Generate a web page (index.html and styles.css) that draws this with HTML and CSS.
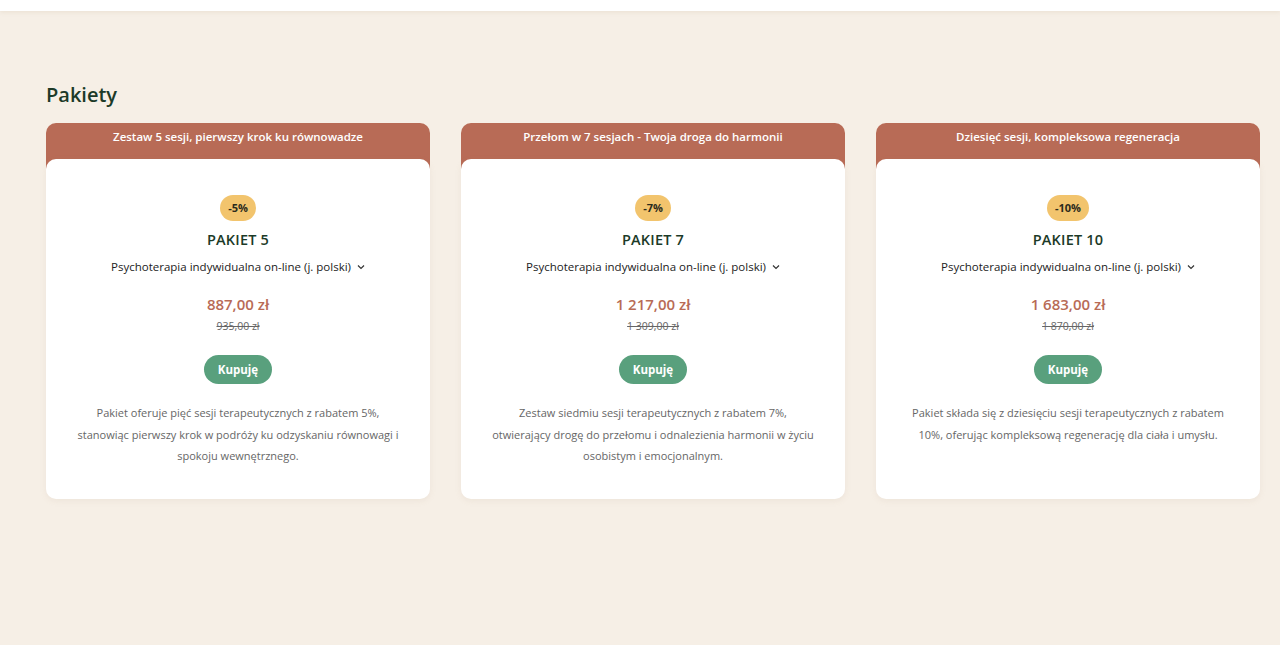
FILE: index.html
```html
<!doctype html>
<html lang="pl">
  <head>
    <meta charset="utf-8">
    <title>Pakiety</title>
    <meta name="viewport" content="width=device-width, initial-scale=1">
    <link rel="stylesheet" href="styles.css">
  </head>
  <body>
    <div class="topbar"></div>
    <section class="packages">
      <h2 class="packages-title">Pakiety</h2>
      <div class="packages-grid">
        <div class="card">
          <div class="card-head">Zestaw 5 sesji, pierwszy krok ku równowadze</div>
          <div class="card-body">
            <span class="badge">-5%</span>
            <h3 class="card-name">PAKIET 5</h3>
            <div class="card-select">Psychoterapia indywidualna on-line (j. polski)
              <svg class="chev" width="8" height="6" viewBox="0 0 8 6"><path d="M1 1.5 4 4.5 7 1.5" fill="none" stroke="#333" stroke-width="1.2"/></svg>
            </div>
            <div class="price">887,00 zł</div>
            <div class="old-price">935,00 zł</div>
            <a class="buy" href="#">Kupuję</a>
            <p class="desc">Pakiet oferuje pięć sesji terapeutycznych z rabatem 5%, stanowiąc pierwszy krok w podróży ku odzyskaniu równowagi i spokoju wewnętrznego.</p>
          </div>
        </div>
        <div class="card">
          <div class="card-head">Przełom w 7 sesjach - Twoja droga do harmonii</div>
          <div class="card-body">
            <span class="badge">-7%</span>
            <h3 class="card-name">PAKIET 7</h3>
            <div class="card-select">Psychoterapia indywidualna on-line (j. polski)
              <svg class="chev" width="8" height="6" viewBox="0 0 8 6"><path d="M1 1.5 4 4.5 7 1.5" fill="none" stroke="#333" stroke-width="1.2"/></svg>
            </div>
            <div class="price">1 217,00 zł</div>
            <div class="old-price">1 309,00 zł</div>
            <a class="buy" href="#">Kupuję</a>
            <p class="desc">Zestaw siedmiu sesji terapeutycznych z rabatem 7%, otwierający drogę do przełomu i odnalezienia harmonii w życiu osobistym i emocjonalnym.</p>
          </div>
        </div>
        <div class="card">
          <div class="card-head">Dziesięć sesji, kompleksowa regeneracja</div>
          <div class="card-body">
            <span class="badge">-10%</span>
            <h3 class="card-name">PAKIET 10</h3>
            <div class="card-select">Psychoterapia indywidualna on-line (j. polski)
              <svg class="chev" width="8" height="6" viewBox="0 0 8 6"><path d="M1 1.5 4 4.5 7 1.5" fill="none" stroke="#333" stroke-width="1.2"/></svg>
            </div>
            <div class="price">1 683,00 zł</div>
            <div class="old-price">1 870,00 zł</div>
            <a class="buy" href="#">Kupuję</a>
            <p class="desc">Pakiet składa się z dziesięciu sesji terapeutycznych z rabatem 10%, oferując kompleksową regenerację dla ciała i umysłu.</p>
          </div>
        </div>
      </div>
    </section>
  </body>
</html>
```

FILE: styles.css
```css
html,
body {
  margin: 0;
  padding: 0;
}
body {
  background: #f6efe6;
  font-family: "Open Sans", "Noto Sans", sans-serif;
  color: #333333;
  min-height: 645px;
}
.topbar {
  height: 11px;
  background: #ffffff;
  box-shadow: 0 1px 4px rgba(200, 180, 150, 0.25);
}
.packages {
  padding: 70px 20px 0 46px;
}
.packages-title {
  margin: 0 0 14px;
  font-size: 20px;
  line-height: 28px;
  font-weight: 600;
  color: #1c3a28;
}
.packages-grid {
  display: grid;
  grid-template-columns: repeat(3, 384px);
  column-gap: 31px;
}
.card {
  display: flex;
  flex-direction: column;
}
.card-head {
  background: #b86b56;
  color: #ffffff;
  border-radius: 10px 10px 0 0;
  padding: 6px 10px 24px;
  font-size: 11.5px;
  line-height: 16px;
  font-weight: 600;
  text-align: center;
}
.card-body {
  flex: 1;
  margin-top: -10px;
  background: #ffffff;
  border-radius: 10px;
  padding: 36px 30px 32px;
  display: flex;
  flex-direction: column;
  align-items: center;
  box-shadow: 0 2px 6px rgba(180, 160, 130, 0.12);
}
.badge {
  display: inline-block;
  height: 26px;
  line-height: 26px;
  padding: 0 8px;
  border-radius: 13px;
  background: #f2c46d;
  color: #2b2b1c;
  font-size: 11px;
  font-weight: 700;
}
.card-name {
  margin: 9px 0 0;
  font-size: 14.5px;
  line-height: 20px;
  font-weight: 600;
  color: #1c3a28;
  letter-spacing: 0.2px;
}
.card-select {
  margin-top: 8px;
  font-size: 11.5px;
  line-height: 18px;
  color: #222222;
  display: flex;
  align-items: center;
  gap: 6px;
}
.price {
  margin-top: 17px;
  font-size: 15px;
  line-height: 22px;
  font-weight: 600;
  color: #b86b56;
}
.old-price {
  margin-top: 3px;
  font-size: 10.5px;
  line-height: 16px;
  color: #666666;
  text-decoration: line-through;
}
.buy {
  margin-top: 21px;
  display: inline-block;
  height: 29px;
  line-height: 29px;
  padding: 0 14px;
  border-radius: 15px;
  background: #59a07d;
  color: #ffffff;
  font-size: 11.5px;
  font-weight: 700;
  text-decoration: none;
}
.desc {
  margin: 18px 0 0;
  font-size: 11px;
  line-height: 21.5px;
  color: #666666;
  text-align: center;
}
```
